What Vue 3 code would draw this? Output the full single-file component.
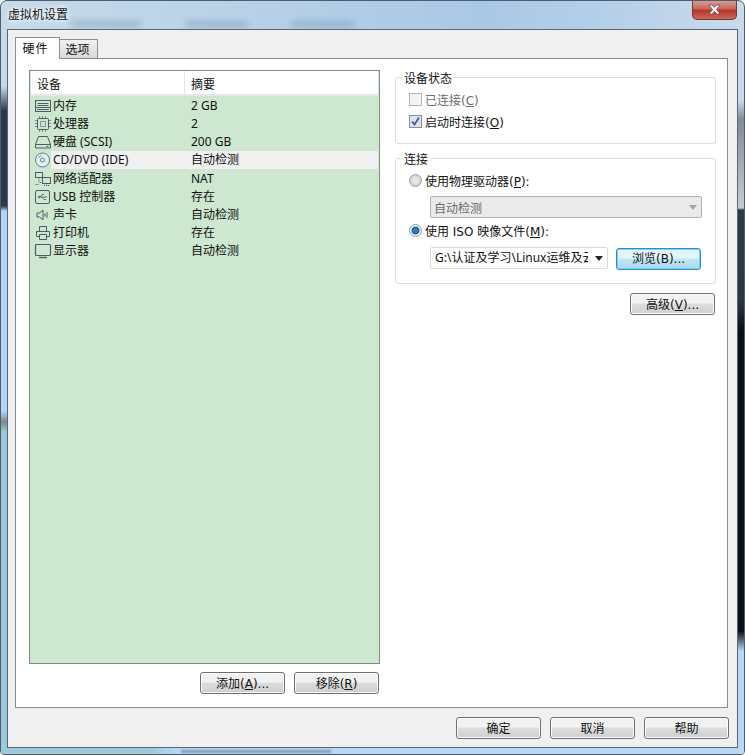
<script setup>
const rows = [
  { icon: 'mem', name: '内存', value: '2 GB' },
  { icon: 'cpu', name: '处理器', value: '2' },
  { icon: 'disk', name: '硬盘 (SCSI)', value: '200 GB' },
  { icon: 'cd', name: 'CD/DVD (IDE)', value: '自动检测', selected: true },
  { icon: 'net', name: '网络适配器', value: 'NAT' },
  { icon: 'usb', name: 'USB 控制器', value: '存在' },
  { icon: 'snd', name: '声卡', value: '自动检测' },
  { icon: 'prn', name: '打印机', value: '存在' },
  { icon: 'mon', name: '显示器', value: '自动检测' },
]
</script>

<template>
  <div class="win">
    <i class="edge edge-l"></i><i class="edge edge-r"></i>
    <div class="titlebar">
      <i class="smudge s1"></i><i class="smudge s2"></i><i class="smudge s3"></i>
      <span class="title">虚拟机设置</span>
      <button class="close"><svg width="15" height="11" viewBox="0 0 15 11"><path d="M2 1h3.200l2.300 2.400L9.800 1H13L9.500 5.500 13 10H9.800L7.500 7.600 5.200 10H2l3.500-4.500z" fill="#fff" stroke="#6b4a4a" stroke-width=".8"/></svg></button>
    </div>
    <div class="client">
      <div class="tabs">
        <div class="tab active">硬件</div>
        <div class="tab">选项</div>
      </div>
      <div class="panel">
        <div class="left">
          <div class="table">
            <div class="thead"><span class="c1">设备</span><span class="c2">摘要</span></div>
            <div class="tbody">
              <div v-for="r in rows" :key="r.name" class="row" :class="{ sel: r.selected }">
                <svg class="ic" width="18" height="18" viewBox="0 0 18 18" fill="none" stroke="#4d5c66" stroke-width="1">
                  <template v-if="r.icon === 'mem'"><rect x="1.500" y="3.500" width="15" height="11" /><path d="M1.500 10.500h15M3.500 6.500h11M3.500 8.500h11M3 12.500h12" /></template>
                  <template v-else-if="r.icon === 'cpu'"><rect x="3.500" y="3.500" width="11" height="11" rx="1" /><rect x="6.500" y="6.500" width="5" height="5" stroke="#8a979f" /><path d="M5.500 1v2M8.500 1v2M11.500 1v2M5.500 15v2M8.500 15v2M11.500 15v2M1 5.500h2M1 8.500h2M1 11.500h2M15 5.500h2M15 8.500h2M15 11.500h2" stroke="#7b8890" /></template>
                  <template v-else-if="r.icon === 'disk'"><path d="M4.500 3.500h9l3 8v3.500h-15v-3.500zM1.500 11.500h15" /><path d="M12.500 13.500h2" /></template>
                  <template v-else-if="r.icon === 'cd'"><circle cx="8.500" cy="9" r="7" fill="#e4f0ee" stroke="#5b7f97" /><circle cx="8.500" cy="9" r="2" stroke="#5b7f97" /><path d="M4.500 7a4.500 4.500 0 0 1 3-2.500" stroke="#7c98aa" /></template>
                  <template v-else-if="r.icon === 'net'"><rect x="1.500" y="2.500" width="7" height="5" /><rect x="8.500" y="7.500" width="8" height="6" /><path d="M5 7.500v5H8.500M12.500 13.500v2M10 15.500h5M1.500 14.500h4" stroke-dasharray="1 1" /></template>
                  <template v-else-if="r.icon === 'usb'"><rect x="1.500" y="2.500" width="14" height="13" rx="1.500" /><path d="M4 9h9M6 9l2-2.500h2M8 9l2 2.500h2M4 9l1.500-1v2z" stroke="#5d7482" /></template>
                  <template v-else-if="r.icon === 'snd'"><path d="M3 7h2.500L9 4v10l-3.500-3H3zM11 7.500v3M13 6v6" /></template>
                  <template v-else-if="r.icon === 'prn'"><path d="M5.500 7V2.500h7V7M5.500 12.500h-3V7.500h13v5h-3M5.500 10.500h7v5h-7z" /></template>
                  <template v-else><rect x="1.500" y="2.500" width="15" height="11" rx="1" stroke-width="1.200" /><path d="M5 15.500h8" stroke-width="1.400" /></template>
                </svg>
                <span class="name">{{ r.name }}</span>
                <span class="val">{{ r.value }}</span>
              </div>
            </div>
          </div>
          <div class="left-btns">
            <button class="btn">添加(<u>A</u>)...</button>
            <button class="btn">移除(<u>R</u>)</button>
          </div>
        </div>
        <div class="right">
          <fieldset class="group g1">
            <legend><span class="lg">设备状态</span></legend>
            <label class="check off"><span class="box"></span><span>已连接(<u>C</u>)</span></label>
            <label class="check"><span class="box on"><svg width="11" height="11" viewBox="0 0 11 11"><path d="M2 5.500l2.500 3L9 1.500" fill="none" stroke="#3f5a96" stroke-width="1.800" /></svg></span><span>启动时连接(<u>O</u>)</span></label>
          </fieldset>
          <fieldset class="group g2">
            <legend><span class="lg">连接</span></legend>
            <label class="radio"><span class="dot"></span><span>使用物理驱动器(<u>P</u>):</span></label>
            <div class="select dis">自动检测<i class="arrow"></i></div>
            <label class="radio"><span class="dot on"></span><span>使用 ISO 映像文件(<u>M</u>):</span></label>
            <div class="filerow">
              <div class="select file"><span class="path">G:\认证及学习\Linux运维及云</span><i class="arrow"></i></div>
              <button class="btn browse">浏览(B)...</button>
            </div>
          </fieldset>
          <div class="adv"><button class="btn">高级(<u>V</u>)...</button></div>
        </div>
      </div>
      <div class="footer">
        <button class="btn">确定</button>
        <button class="btn">取消</button>
        <button class="btn">帮助</button>
      </div>
    </div>
    <i class="strip"></i>
  </div>
</template>

<style>
html, body { margin: 0; background: #fff; overflow: hidden; }
</style>

<style scoped>
.win {
  width: 745px; height: 755px; box-sizing: border-box; position: relative; overflow: hidden;
  display: flex; flex-direction: column;
  background: linear-gradient(90deg, #c6dbea 0%, #a9c8e6 65%, #b4cfe9 80%, #c8daec 100%);
  font: 12px "Noto Sans", "Noto Sans CJK SC", sans-serif; color: #111;
  border: 1px solid #4e5c6b; border-radius: 7px 7px 4px 4px;
}
.edge { position: absolute; top: 0; bottom: 0; width: 6px; }
.edge-l { left: 0; background: linear-gradient(180deg, transparent 0 85px, #2a3a4a 110px, #2a3a4a 205px, #b3d4f5 210px, #b3d4f5 410px, #7a8a8a 421px, #9ccadb 431px, #9ccadb 100%); }
.edge-r { right: 0; background: linear-gradient(180deg, transparent 0 100px, #7f8c94 118px, #c8ccd0 207px, #2c3a44 209px, #2a3740 300px, #0a0f13 330px, #0a0f13 630px, #b7d8f8 650px, #b7d8f8 100%); }
.titlebar { height: 28px; flex: none; display: flex; align-items: flex-start; position: relative; }
.title { margin: 5px 0 0 7px; font-size: 12px; line-height: 18px; text-shadow: 0 0 5px #fff, 0 0 5px #fff; position: relative; }
.smudge { position: absolute; top: 20px; height: 6px; background: #6f8cab; filter: blur(3px); opacity: .45; }
.s1 { left: 70px; width: 70px; }
.s2 { left: 185px; width: 62px; }
.s3 { left: 290px; width: 63px; }
.close {
  position: absolute; right: 7px; top: -1px; width: 45px; height: 20px; padding: 0; display: flex; align-items: center; justify-content: center;
  border: 1px solid #6b3a3a; border-top: 0; border-radius: 0 0 5px 5px;
  background: linear-gradient(#d9a19a, #c8685c 45%, #b8372a 55%, #c9665a);
}
.client {
  flex: 1; margin: 0 6px 6px 6px; background: #f0f0f0; border: 1px solid #5c6670; min-height: 0;
  display: flex; flex-direction: column; box-sizing: border-box; padding: 7px 9px 0 7px; position: relative; z-index: 1;
}
.tabs { display: flex; align-items: flex-end; height: 21px; flex: none; position: relative; z-index: 1; }
.tab { width: 38px; height: 19px; box-sizing: border-box; border: 1px solid #8e8f8f; border-bottom: 0; border-left: 0; background: linear-gradient(#f2f2f2, #d8d8d8); padding-right: 2px; text-align: center; line-height: 20px; }
.tab.active { width: 45px; background: #fff; border-left: 1px solid #8e8f8f; margin-bottom: -1px; height: 22px; line-height: 22px; letter-spacing: 1px; padding-right: 4px; }
.panel { height: 650px; flex: none; box-sizing: border-box; background: #fff; border: 1px solid #898c95; display: flex; padding: 11px 11px 0 13px; gap: 15px; }
.left { width: 351px; flex: none; }
.table { height: 594px; box-sizing: border-box; border: 1px solid #7f8d83; background: #cde7d0; }
.thead { height: 23px; display: flex; align-items: stretch; background: #fff; border-bottom: 2px solid #e5e8e6; box-sizing: content-box; line-height: 28px; margin: 0 1px; }
.c1 { width: 153px; padding-left: 6px; box-sizing: border-box; }
.c2 { border-left: 1px solid #e4e6e8; padding-left: 6px; }
.tbody { padding-top: .95px; }
.row { display: flex; height: 18.125px; align-items: center; position: relative; line-height: 18px; }
.row.sel::before { content: ""; position: absolute; left: 21px; right: 1px; top: 0; height: 18px; background: #f0f0f0; }
.ic { flex: none; margin-left: 4px; position: relative; }
.name { width: 138px; margin-left: 1px; white-space: nowrap; position: relative; }
.val { flex: 1; white-space: nowrap; position: relative; }
.left-btns { display: flex; justify-content: flex-end; gap: 9px; margin-top: 8px; padding-right: 1px; }
.btn {
  width: 85px; height: 22px; padding: 3px 0 0; box-sizing: border-box; font: 12px "DejaVu Sans", "Noto Sans CJK SC", sans-serif; color: #111;
  border: 1px solid #707070; border-radius: 3px; box-shadow: inset 0 0 0 1px #fbfbfb;
  background: linear-gradient(#f2f2f2 0 45%, #dddddd 50%, #cfcfcf 100%);
  line-height: 17px;
}
.right { flex: 1; min-width: 0; }
.group { margin: 0; padding: 0; border: 1px solid #d5dfe5; border-radius: 3px; box-sizing: border-box; position: relative; min-width: 0; }
.group legend { margin-left: -7px; padding: 0 2px; line-height: 14px; }
.lg { position: relative; top: 2px; }
.g1 { height: 74px; padding: 4px 0 0 13px; }
.g2 { height: 133px; margin-top: 7px; padding: 5px 0 0 13px; }
.check, .radio { display: flex; align-items: center; height: 21px; gap: 3px; font-family: "DejaVu Sans", "Noto Sans CJK SC", sans-serif; }
.check { height: 22px; }
.check.off { color: #6d6d6d; }
.box { width: 13px; height: 13px; box-sizing: border-box; border: 1px solid #8e8f8f; background: #f4f4f4; display: flex; align-items: center; justify-content: center; }
.off .box { border-color: #b1b1b1; background: #f4f4f4; }
.box.on { background: #dde4f0; }
.dot { width: 13px; height: 13px; box-sizing: border-box; border-radius: 50%; border: 1px solid #97a0a8; background: radial-gradient(circle, #e8e8e8 30%, #d2d2d2 60%, #f4f4f4 100%); }
.dot.on { background: radial-gradient(circle, #2f7fc0 0 30%, #0f4d83 45%, #e8eef4 55%); }
.select { position: relative; height: 22px; box-sizing: border-box; margin-left: 21px; width: 272px; border: 1px solid #b4b4b4; border-radius: 2px; line-height: 20px; padding-left: 3px; }
.select.dis { color: #6d6d6d; background: #eaeaea; margin-top: 5px; margin-bottom: 2px; border-color: #b0b0b0; line-height: 23px; }
.arrow { position: absolute; right: 4px; top: 8px; border: 4px solid transparent; border-top: 5px solid #a5a5a5; border-bottom: 0; }
.filerow { display: flex; margin-left: 21px; gap: 8px; margin-top: 6px; align-items: flex-start; }
.select.file { margin: 0; width: 178px; height: 22px; background: #fff; border-color: #d9d9d9; padding-left: 4px; overflow: hidden; }
.path { display: block; width: 153px; overflow: hidden; white-space: nowrap; }
.file .arrow { border-top-color: #222; }
.browse { margin-top: 1px; padding-top: 1px; line-height: 19px; border-color: #2b8ec7; background: linear-gradient(#e4f4fc 0 45%, #c3e6f8 50%, #a9d9f2 100%); box-shadow: inset 0 0 0 1px #7fd1f3; }
.adv { display: flex; justify-content: flex-end; margin-top: 9px; padding-right: 1px; }
.footer { flex: 1; display: flex; justify-content: flex-end; gap: 9px; padding: 9px 0 0 0; margin-right: -1px; align-items: flex-start; }
.strip { position: absolute; left: 0; right: 0; bottom: 0; height: 6px; background: linear-gradient(90deg, #9ccadb 0 20%, #b7d8f8 24%); }
.strip::after { content: ""; position: absolute; left: 180px; width: 150px; top: 2px; height: 3px; background: #6a7f98; filter: blur(1px); opacity: .7; }
u { text-decoration: underline; }
</style>
